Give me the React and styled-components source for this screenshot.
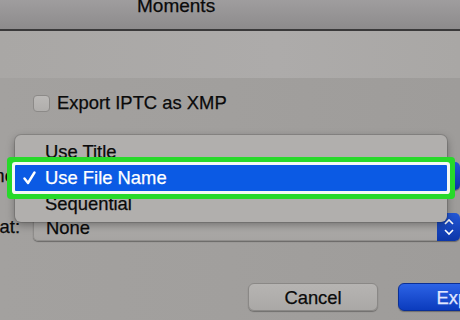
import styled, { createGlobalStyle } from "styled-components";

const GlobalStyle = createGlobalStyle`
  html, body {
    margin: 0;
    padding: 0;
    width: 460px;
    height: 320px;
    overflow: hidden;
    background: #a09e9c;
  }
  body {
    font-family: "Liberation Sans", Arial, sans-serif;
    color: #0a0a0a;
    -webkit-text-stroke: 0.25px currentColor;
  }
`;

const Window = styled.div`
  position: relative;
  display: flex;
  flex-direction: column;
  width: 460px;
  height: 320px;
  overflow: hidden;
  background: linear-gradient(90deg, #a3a19f, #a19f9d 50%, #9e9c9a);
`;

const TitleBar = styled.div`
  height: 31px;
  display: flex;
  align-items: flex-end;
  padding: 0 0 14px 137px;
  box-sizing: border-box;
  background: linear-gradient(#9f9d9e, #8d8b8c);
  border-bottom: 2px solid #3a393a;
  font-size: 19px;
  line-height: 19px;
`;

const Band = styled.div`
  height: 47px;
  background: linear-gradient(90deg, #a9a7a5, #adabaa 60%, #a9a7a5);
`;

const Content = styled.div`
  display: flex;
  flex-direction: column;
  padding-top: 16px;
  flex: 1;
`;

const CheckRow = styled.label`
  display: flex;
  align-items: center;
  gap: 7px;
  height: 18px;
  padding-left: 33px;
  font-size: 18.4px;
`;

const CheckBox = styled.span`
  width: 17px;
  height: 17px;
  box-sizing: border-box;
  border-radius: 4px;
  border: 1px solid #8c8a88;
  background: linear-gradient(#bbb9b7, #b0aeac);
`;

const FieldRow = styled.div`
  display: grid;
  grid-template-columns: 20px 1fr;
  column-gap: 13px;
  align-items: center;
  height: 28px;
  margin-top: ${(p) => p.$top}px;
`;

const Label = styled.div`
  display: flex;
  justify-content: flex-end;
  white-space: nowrap;
  font-size: 18.4px;
`;

const Select = styled.div`
  display: flex;
  height: 28px;
  border-radius: 5px;
  overflow: hidden;
  box-shadow: 0 1px 1px rgba(0, 0, 0, 0.35);
`;

const SelectValue = styled.div`
  flex: 1;
  display: flex;
  align-items: center;
  padding: 2px 0 0 12px;
  font-size: 18.4px;
  background: linear-gradient(#b2b0ae, #a6a4a2);
  border: 1px solid #8f8d8b;
  border-right: none;
  border-radius: 5px 0 0 5px;
`;

const Stepper = styled.div`
  width: 23px;
  display: flex;
  align-items: center;
  justify-content: center;
  background: linear-gradient(#2458d6, #0c36a8);
`;

const ButtonRow = styled.div`
  display: flex;
  gap: 20px;
  padding-left: 248px;
  margin-top: 42px;
`;

const Button = styled.div`
  flex: 0 0 130px;
  height: 28px;
  box-sizing: border-box;
  display: flex;
  align-items: center;
  justify-content: center;
  padding-top: 2px;
  border-radius: 6px;
  font-size: 18.4px;
  color: ${(p) => (p.$primary ? "#e2e8ff" : "#0a0a0a")};
  background: ${(p) =>
    p.$primary
      ? "linear-gradient(#2c63e6, #0b3bbd)"
      : "linear-gradient(#b6b4b2, #aaa8a6)"};
  border: 1px solid ${(p) => (p.$primary ? "#0a2f96" : "#8a8886")};
  box-shadow: 0 1px 1px rgba(0, 0, 0, 0.3);
`;

const Menu = styled.div`
  position: absolute;
  left: 15px;
  top: 135px;
  width: 432px;
  padding: 4px 0 5px;
  border-radius: 6px;
  background: #b1afad;
  box-shadow: 0 3px 8px rgba(0, 0, 0, 0.35), 0 0 0 1px rgba(0, 0, 0, 0.12);
`;

const MenuItem = styled.div`
  position: relative;
  height: 26px;
  display: flex;
  align-items: center;
  padding-left: 30px;
  font-size: 18.4px;
  color: ${(p) => (p.$active ? "#fff" : "#0a0a0a")};
  background: ${(p) => (p.$active ? "#0b5ae4" : "transparent")};
  box-shadow: ${(p) =>
    p.$active ? "0 0 0 3px #f4f8f4, 0 0 0 8px #27d92a" : "none"};
  border-radius: 1px;
  z-index: ${(p) => (p.$active ? 1 : 0)};
`;

const Check = styled.svg`
  position: absolute;
  left: 8px;
  top: 6px;
`;

const Chevrons = ({ color = "#fff" }) => (
  <svg width="12" height="20" viewBox="0 0 12 20">
    <path d="M2 7 L6 3 L10 7" fill="none" stroke={color} strokeWidth="1.6" />
    <path d="M2 13 L6 17 L10 13" fill="none" stroke={color} strokeWidth="1.6" />
  </svg>
);

export default function App() {
  return (
    <>
      <GlobalStyle />
      <Window>
        <TitleBar>Moments</TitleBar>
        <Band />
        <Content>
          <CheckRow>
            <CheckBox />
            Export IPTC as XMP
          </CheckRow>
          {/* popup button lies under the open menu; only its label peeks out */}
          <FieldRow $top={50}>
            <Label>Filename:</Label>
            <Select>
              <SelectValue />
              <Stepper>
                <Chevrons />
              </Stepper>
            </Select>
          </FieldRow>
          <FieldRow $top={23}>
            <Label>Format:</Label>
            <Select>
              <SelectValue>None</SelectValue>
              <Stepper>
                <Chevrons />
              </Stepper>
            </Select>
          </FieldRow>
          <ButtonRow>
            <Button>Cancel</Button>
            <Button $primary>Export</Button>
          </ButtonRow>
        </Content>
        <Menu>
          <MenuItem>Use Title</MenuItem>
          <MenuItem $active>
            <Check width="13" height="14" viewBox="0 0 13 14">
              <path
                d="M1.5 7.5 L5 12 L11.5 1.5"
                fill="none"
                stroke="#fff"
                strokeWidth="2.4"
                strokeLinecap="round"
                strokeLinejoin="round"
              />
            </Check>
            Use File Name
          </MenuItem>
          <MenuItem>Sequential</MenuItem>
        </Menu>
      </Window>
    </>
  );
}
